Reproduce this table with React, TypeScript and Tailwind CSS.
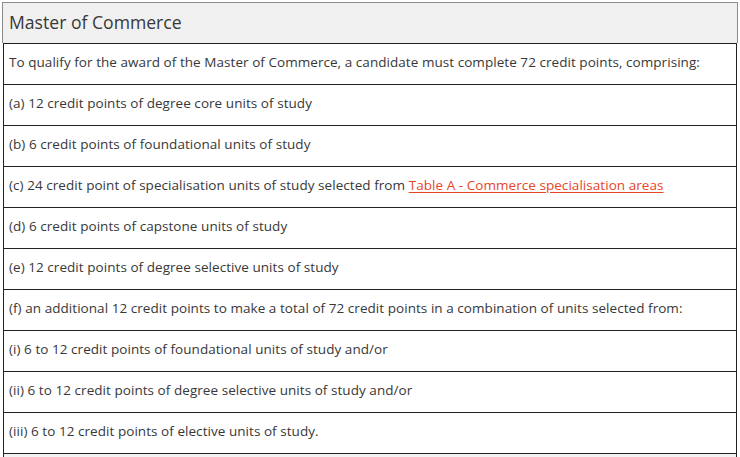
import React from 'react';

const rows: React.ReactNode[] = [
  'To qualify for the award of the Master of Commerce, a candidate must complete 72 credit points, comprising:',
  '(a) 12 credit points of degree core units of study',
  '(b) 6 credit points of foundational units of study',
  <>
    (c) 24 credit point of specialisation units of study selected from{' '}
    <a href="#" className="text-[#e64626] underline underline-offset-2">
      Table A - Commerce specialisation areas
    </a>
  </>,
  '(d) 6 credit points of capstone units of study',
  '(e) 12 credit points of degree selective units of study',
  '(f) an additional 12 credit points to make a total of 72 credit points in a combination of units selected from:',
  '(i) 6 to 12 credit points of foundational units of study and/or',
  '(ii) 6 to 12 credit points of degree selective units of study and/or',
  '(iii) 6 to 12 credit points of elective units of study.',
];

const App = () => {
  return (
    <div className="w-[740px] h-[457px] overflow-hidden bg-white pt-[2px] px-[2px] font-['Open_Sans',sans-serif] text-[#383838]">
      <div className="h-[41px] border-t border-x border-[#8c8c8c] bg-[#f0f0f0] flex items-center px-[6px] pb-[2px] text-[17.6px]">
        Master of Commerce
      </div>
      <div className="mx-[1px] border-x border-t border-[#222]">
        {rows.map((r, i) => (
          <div
            key={i}
            className="h-[41px] border-b border-[#222] flex items-center px-[5px] pb-[3px] text-[13.5px] tracking-[0.05px]"
          >
            <span>{r}</span>
          </div>
        ))}
        <div className="h-[10px] bg-[#f2f2f2]" />
      </div>
    </div>
  );
};

export default App;
